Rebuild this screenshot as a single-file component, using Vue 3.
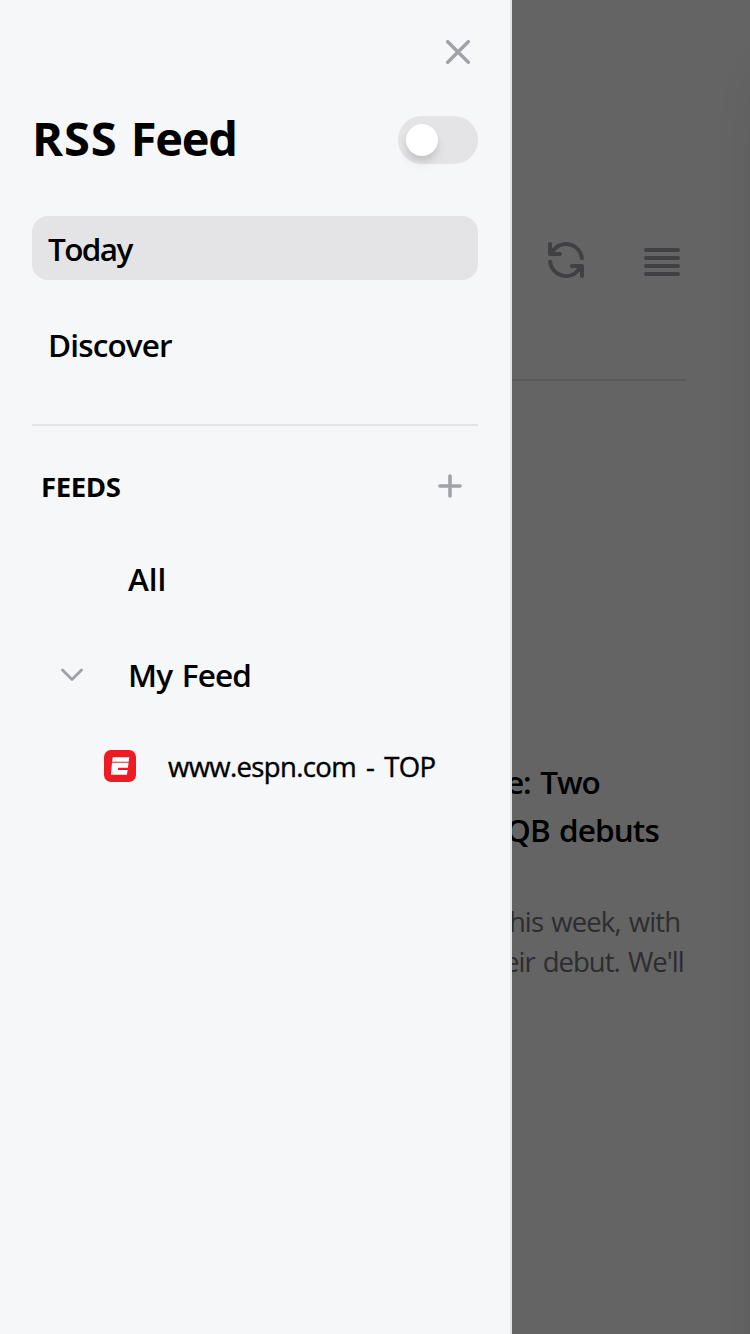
<script setup>
const links = [
  { name: 'Today', active: true },
  { name: 'Discover', active: false },
]
</script>

<template>
  <div class="screen">
    <main class="page">
      <header class="tools">
        <svg class="refresh" viewBox="0 0 40 40"><path d="M4 4v10h10M36 36V26H26M4.500 13.500L8.500 8.900A16 16 0 0 1 35.900 18.200M35.500 26.500L31.500 31.100A16 16 0 0 1 4.100 21.800" /></svg>
        <svg class="list" viewBox="0 0 36 28"><path d="M2 2h32M2 10h32M2 18h32M2 26h32" /></svg>
      </header>
      <article class="story">
        <h2><span class="h-one">e: Two</span><span class="h-two">QB debuts</span></h2>
        <p><span class="p-one">this week, with</span><span class="p-two">eir debut. We'll</span></p>
      </article>
      <div class="offcanvas"></div>
    </main>
    <div class="overlay"></div>
    <aside class="drawer">
      <div class="close-row">
        <svg class="close" viewBox="0 0 24 24"><path d="M1.700 1.700l20.600 20.600M22.300 1.700l-20.600 20.600" /></svg>
      </div>
      <div class="brand">
        <h1><span class="t-rss">RSS</span> <span class="t-feed">Feed</span></h1>
        <div class="switch"><i></i></div>
      </div>
      <nav>
        <a v-for="l in links" :key="l.name" :class="['link', l.name.toLowerCase(), { active: l.active }]"><span>{{ l.name }}</span></a>
      </nav>
      <hr />
      <div class="feeds-head">
        <h3>FEEDS</h3>
        <svg class="plus" viewBox="0 0 24 24"><path d="M12 2v20M2 12h20" /></svg>
      </div>
      <div class="row all"><span>All</span></div>
      <div class="row group">
        <svg class="chev" viewBox="0 0 22 14"><path d="M1.500 2L11 11.500L20.500 2" /></svg>
        <span>My Feed</span>
      </div>
      <div class="source">
        <svg class="logo" viewBox="0 0 32 32">
          <rect width="32" height="32" rx="7" fill="#ed1c24" />
          <path d="M8.700 7.200H25.300L24.700 11.800H8.200zM8 12.700H24.600L23.900 17.700H14.200L13.900 19.900H23.600L22.900 24.800H6.900z" fill="#fff" />
        </svg>
        <span>www.espn.com - TOP</span>
      </div>
    </aside>
  </div>
</template>

<style>
body { margin: 0; overflow: hidden; }
</style>

<style scoped>
.screen { position: relative; width: 750px; height: 1334px; overflow: hidden; background: #fafafa; font-family: "Open Sans", "Noto Sans", sans-serif; color: #000; }
.screen * { box-sizing: border-box; }
h1, h2, h3, p { margin: 0; }
svg { display: block; fill: none; stroke: #a1a1aa; stroke-linecap: round; stroke-linejoin: round; }
span { white-space: nowrap; }
.page { padding: 240px 64px 0; }
.tools { display: flex; justify-content: flex-end; height: 141px; border-bottom: 2px solid #e4e4e7; }
.refresh { width: 40px; height: 40px; stroke-width: 4; margin-right: 58px; }
.list { width: 36px; height: 28px; stroke-width: 4; margin: 8px 6px 0 0; }
.story { padding: 377px 0 0 442px; }
.story span { display: block; }
h2 { font-size: 31.500px; line-height: 48px; font-weight: 600; }
.h-one { letter-spacing: -1.200px; word-spacing: 3px; }
.h-two { letter-spacing: -.900px; word-spacing: 2px; }
p { margin-top: 48px; font-size: 27.500px; line-height: 40px; color: #71717a; }
.p-one { letter-spacing: -.900px; word-spacing: 2px; margin-left: -6px; }
.p-two { letter-spacing: -1px; word-spacing: 2px; margin-left: -2px; }
.offcanvas { position: absolute; left: 774px; top: 74px; width: 600px; height: 1400px; box-shadow: 0 0 60px rgba(0, 0, 0, .17); }
.overlay { position: absolute; inset: 0; background: rgba(0, 0, 0, .6); }
.drawer { position: absolute; top: 0; left: 0; width: 512px; height: 1334px; padding: 40px 32px 0; background: #f6f7f9; border-right: 2px solid #e4e4e7; }
.close-row { display: flex; justify-content: flex-end; padding-right: 8px; height: 76px; }
.close { width: 24px; height: 24px; stroke-width: 3.400; }
.brand { display: flex; justify-content: space-between; height: 48px; }
h1 { font-size: 47px; line-height: 44px; font-weight: 700; white-space: nowrap; }
.t-rss { letter-spacing: .900px; }
.t-feed { letter-spacing: -1.300px; margin-left: 1px; }
.switch { width: 80px; height: 48px; border-radius: 24px; padding: 8px; background: #e4e4e6; }
.switch i { display: block; width: 32px; height: 32px; border-radius: 50%; background: #fff; box-shadow: 0 8px 12px -2px rgba(0, 0, 0, .12), 0 4px 8px -2px rgba(0, 0, 0, .08); }
nav { margin-top: 52px; display: flex; flex-direction: column; gap: 32px; }
.link { height: 64px; padding: 0 16px; border-radius: 16px; font-size: 31.500px; font-weight: 600; line-height: 66px; }
.today { letter-spacing: -1.600px; }
.discover { letter-spacing: -.850px; }
.active { background: #e4e4e6; }
hr { height: 2px; border: 0; margin: 48px 0; background: #e4e4e7; }
.feeds-head { display: flex; justify-content: space-between; align-items: center; height: 24px; padding: 0 16px 0 9px; }
h3 { font-size: 27.500px; font-weight: 700; line-height: 26px; letter-spacing: -.400px; padding-top: 2px; }
.plus { width: 24px; height: 24px; stroke-width: 3.600; }
.row { display: flex; align-items: center; height: 64px; padding-left: 96px; font-size: 31.500px; font-weight: 600; }
.all { margin-top: 48px; }
.group { margin-top: 32px; padding-left: 29px; letter-spacing: -.800px; word-spacing: 2px; }
.chev { width: 22px; height: 14px; stroke-width: 2.800; margin: 2px 45px 0 0; }
.source { display: flex; align-items: center; height: 64px; margin-top: 28px; padding-left: 72px; font-size: 27.500px; font-weight: 500; letter-spacing: -.650px; word-spacing: 3.500px; -webkit-text-stroke: .400px #000; }
.source span { padding-top: 1px; }
.logo { width: 32px; height: 32px; margin-right: 32px; stroke: none; }
</style>
